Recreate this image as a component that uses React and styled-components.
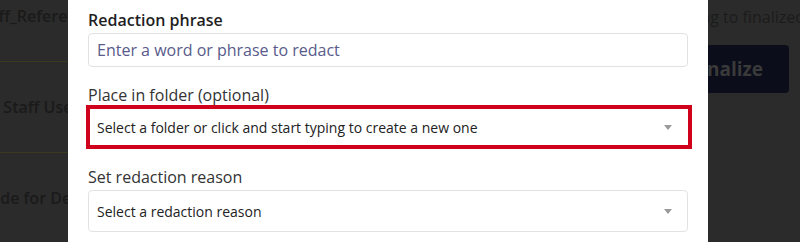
import React from "react";
import styled, { createGlobalStyle } from "styled-components";

const GlobalStyle = createGlobalStyle`
  html, body { margin: 0; padding: 0; background: #2b2b2b; }
  body { font-family: "Open Sans", "Liberation Sans", sans-serif; }
  * { box-sizing: border-box; }
`;

const Page = styled.div`
  display: flex;
  width: 800px;
  height: 242px;
  overflow: hidden;
  background: #2b2b2b;
`;

const LeftBg = styled.div`
  width: 68px;
  flex: none;
  overflow: hidden;
`;

const BgTable = styled.div`
  width: 400px;
  margin-left: -26px;
  margin-top: -29px;
`;

const BgRow = styled.div`
  height: 91px;
  display: flex;
  align-items: center;
  border-bottom: 1px solid #3a391d;
  font-size: 16px;
  font-weight: 600;
  color: #1a1a1a;
  white-space: nowrap;
`;

const Modal = styled.div`
  width: 640px;
  flex: none;
  background: #ffffff;
  padding: 9px 20px 0 20px;
`;

const Field = styled.div`
  display: flex;
  flex-direction: column;
  & + & { margin-top: 17px; }
`;

const Label = styled.label`
  font-size: 16px;
  line-height: 22px;
  font-weight: ${(p) => (p.$strong ? 600 : 400)};
  color: ${(p) => (p.$strong ? "#1f1f1f" : "#333333")};
  margin-bottom: 2px;
`;

const TextInput = styled.input`
  width: 100%;
  height: 34px;
  border: 1px solid #e2e2e2;
  border-radius: 4px;
  padding: 0 8px;
  font-family: inherit;
  font-size: 16px;
  color: #222;
  outline: none;
  &::placeholder { color: #585b8b; opacity: 1; }
`;

const Select = styled.div`
  display: flex;
  align-items: center;
  justify-content: space-between;
  height: ${(p) => (p.$highlighted ? "44px" : "42px")};
  margin: ${(p) => (p.$highlighted ? "-3px -4px 0 -2px" : "0")};
  border: ${(p) => (p.$highlighted ? "4px solid #d0021b" : "1px solid #e2e2e2")};
  border-radius: ${(p) => (p.$highlighted ? "0" : "4px")};
  padding: ${(p) => (p.$highlighted ? "0 16px 0 7px" : "0 15px 0 8px")};
  font-size: 14px;
  color: #222222;
  background: #fff;
`;

const Caret = styled.span`
  width: 0;
  height: 0;
  border-left: 4.5px solid transparent;
  border-right: 4.5px solid transparent;
  border-top: 5px solid #9a9a9a;
`;

const RightBg = styled.div`
  width: 92px;
  flex: none;
  overflow: hidden;
  display: flex;
  flex-direction: column;
  align-items: flex-end;
`;

const TopText = styled.div`
  margin-top: 6px;
  margin-right: -5px;
  font-size: 16px;
  line-height: 22px;
  color: #1b1b1b;
  white-space: nowrap;
`;

const FinalizeButton = styled.div`
  margin-top: 17px;
  margin-right: 11px;
  height: 48px;
  display: flex;
  align-items: center;
  padding: 0 26px;
  background: #0c0d1b;
  border-radius: 4px;
  font-size: 19px;
  font-weight: 700;
  color: #3a3a3a;
  white-space: nowrap;
`;

export default function App() {
  return (
    <>
      <GlobalStyle />
      <Page>
        <LeftBg>
          <BgTable>
            <BgRow>Staff_Reference</BgRow>
            <BgRow>For Staff Use</BgRow>
            <BgRow>Guide for Department</BgRow>
          </BgTable>
        </LeftBg>
        <Modal>
          <Field>
            <Label $strong>Redaction phrase</Label>
            <TextInput placeholder="Enter a word or phrase to redact" />
          </Field>
          <Field>
            <Label>Place in folder (optional)</Label>
            <Select $highlighted>
              <span>Select a folder or click and start typing to create a new one</span>
              <Caret />
            </Select>
          </Field>
          <Field>
            <Label>Set redaction reason</Label>
            <Select>
              <span>Select a redaction reason</span>
              <Caret />
            </Select>
          </Field>
        </Modal>
        <RightBg>
          <TopText>Documents moving to finalized</TopText>
          <FinalizeButton>Finalize</FinalizeButton>
        </RightBg>
      </Page>
    </>
  );
}
